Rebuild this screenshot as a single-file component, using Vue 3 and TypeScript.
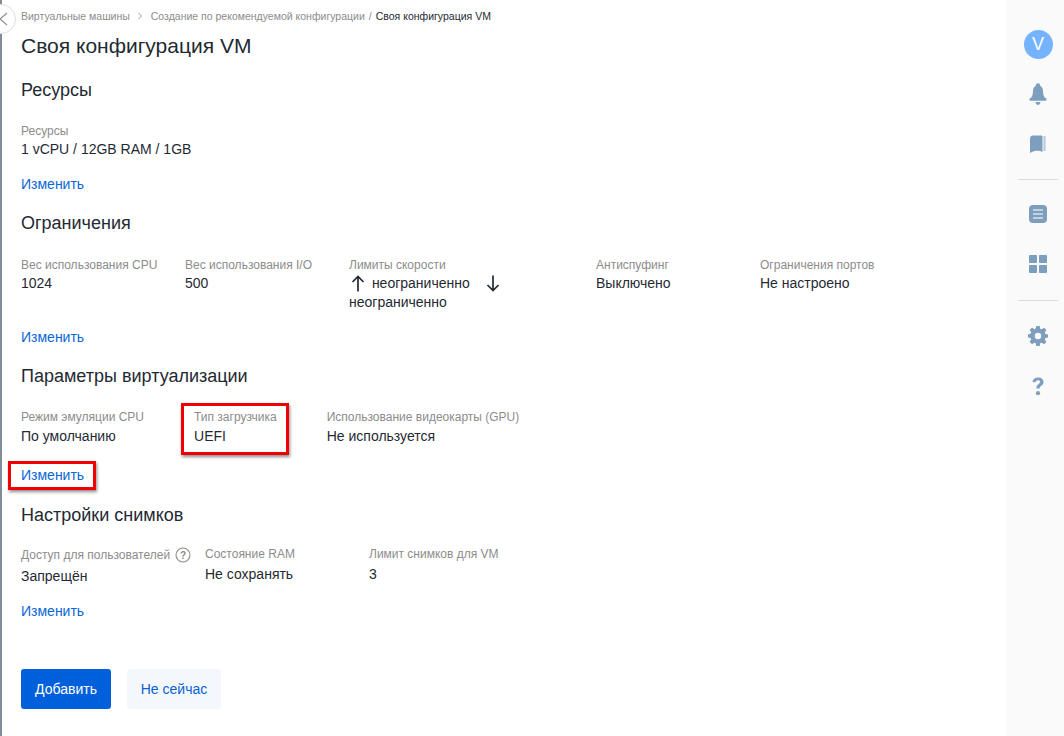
<script setup lang="ts">
interface Field {
  label: string
  value: string
  hint?: boolean
}

const limits: Field[] = [
  { label: 'Вес использования CPU', value: '1024' },
  { label: 'Вес использования I/O', value: '500' }
]
const limitsTail: Field[] = [
  { label: 'Антиспуфинг', value: 'Выключено' },
  { label: 'Ограничения портов', value: 'Не настроено' }
]
const snapshots: Field[] = [
  { label: 'Доступ для пользователей', value: 'Запрещён', hint: true },
  { label: 'Состояние RAM', value: 'Не сохранять' },
  { label: 'Лимит снимков для VM', value: '3' }
]
</script>

<template>
  <div class="page">
    <main class="content">
      <button class="back" aria-label="Назад">
        <svg width="9" height="14" viewBox="0 0 9 14"><path d="M8 1 1 7l7 6" fill="none" stroke="#8a8f94" stroke-width="1.100" /></svg>
      </button>

      <nav class="crumbs">
        <span>Виртуальные машины</span>
        <svg class="chev" width="6" height="8" viewBox="0 0 6 8"><path d="M1.500 1 4.500 4l-3 3" fill="none" stroke="#9a9a9a" /></svg>
        <span>Создание по рекомендуемой конфигурации</span>
        <span class="slash">/</span>
        <span class="current">Своя конфигурация VM</span>
      </nav>

      <h1>Своя конфигурация VM</h1>

      <section class="res">
        <h2>Ресурсы</h2>
        <div class="fields">
          <div class="field auto">
            <div class="label">Ресурсы</div>
            <div class="value">1 vCPU / 12GB RAM / 1GB</div>
          </div>
        </div>
        <a class="link">Изменить</a>
      </section>

      <section class="lim">
        <h2>Ограничения</h2>
        <div class="fields">
          <div v-for="f in limits" :key="f.label" class="field">
            <div class="label">{{ f.label }}</div>
            <div class="value">{{ f.value }}</div>
          </div>
          <div class="field speed">
            <div class="label">Лимиты скорости</div>
            <div class="value speed-value">
              <svg class="arrow up" width="14" height="17" viewBox="0 0 14 17"><path d="M7 16.500V1.500M1.500 7 7 1.500 12.500 7" fill="none" stroke="#1f2a33" stroke-width="1.700" /></svg>
              неограниченно
              <svg class="arrow down" width="14" height="17" viewBox="0 0 14 17"><path d="M7 .5v15M1.500 10 7 15.500 12.500 10" fill="none" stroke="#1f2a33" stroke-width="1.700" /></svg>
              неограниченно
            </div>
          </div>
          <div v-for="f in limitsTail" :key="f.label" class="field">
            <div class="label">{{ f.label }}</div>
            <div class="value">{{ f.value }}</div>
          </div>
        </div>
        <a class="link">Изменить</a>
      </section>

      <section class="virt">
        <h2>Параметры виртуализации</h2>
        <div class="fields wide-gap">
          <div class="field">
            <div class="label">Режим эмуляции CPU</div>
            <div class="value">По умолчанию</div>
          </div>
          <div class="field marked">
            <div class="label">Тип загрузчика</div>
            <div class="value">UEFI</div>
          </div>
          <div class="field">
            <div class="label">Использование видеокарты (GPU)</div>
            <div class="value">Не используется</div>
          </div>
        </div>
        <a class="link marked marked-link">Изменить</a>
      </section>

      <section class="snap">
        <h2>Настройки снимков</h2>
        <div class="fields">
          <div v-for="f in snapshots" :key="f.label" class="field" :class="{ hinted: f.hint }">
            <div class="label">
              {{ f.label }}
              <svg v-if="f.hint" class="hint" width="16" height="16" viewBox="0 0 16 16">
                <circle cx="8" cy="8" r="7" fill="none" stroke="#8c8c8c" stroke-width="1.100" />
                <text x="8" y="11.500" text-anchor="middle" font-size="10" font-weight="700" fill="#8c8c8c" font-family="Liberation Sans">?</text>
              </svg>
            </div>
            <div class="value">{{ f.value }}</div>
          </div>
        </div>
        <a class="link">Изменить</a>
      </section>

      <div class="actions">
        <button class="btn primary">Добавить</button>
        <button class="btn ghost">Не сейчас</button>
      </div>
    </main>

    <aside class="rail">
      <div class="avatar">V</div>
      <svg class="ico bell" width="18" height="22" viewBox="0 0 18 22">
        <circle cx="9" cy="2.500" r="2.200" />
        <path d="M9 2.500c-3.500 0-5 2.500-5 5.500 0 3.500-.8 5.500-2.500 7.500h15C14.800 13.500 14 11.500 14 8c0-3-1.500-5.500-5-5.500Z" />
        <rect x=".5" y="15" width="17" height="2.800" rx="1" />
        <path d="M6.500 19h5c-.3 1.800-1.300 3-2.500 3s-2.200-1.200-2.500-3Z" />
      </svg>
      <svg class="ico book" width="16" height="18" viewBox="0 0 16 18">
        <path d="M0 4C0 1.500 1.200.5 3 .5h8c1 0 1.500.6 1.500 1.500v15c-2-1.300-4-1.600-6.200-1.200C4 16.200 2 16.800 0 18Z" />
        <path d="M13.500 1H15.500v15h-2Z" opacity=".55" />
      </svg>
      <div class="rule"></div>
      <svg class="ico list" width="18" height="18" viewBox="0 0 18 18">
        <rect width="18" height="18" rx="4" />
        <path d="M4 5h10M4 9h10M4 13h10" stroke="#fafafa" stroke-width="1.600" opacity=".75" />
      </svg>
      <svg class="ico tiles" width="18" height="18" viewBox="0 0 18 18">
        <rect width="8" height="8" rx=".8" />
        <rect x="10" width="8" height="8" rx=".8" />
        <rect y="10" width="8" height="8" rx=".8" />
        <rect x="10" y="10" width="8" height="8" rx=".8" />
      </svg>
      <div class="rule second"></div>
      <svg class="ico gear" width="20" height="20" viewBox="0 0 20 20">
        <path fill-rule="evenodd" d="M8.300 0h3.400l.5 2.700 1.500.6 2.300-1.600 2.400 2.400-1.600 2.300.6 1.500 2.700.5v3.200l-2.700.5-.6 1.500 1.600 2.300-2.400 2.400-2.300-1.600-1.500.6-.5 2.700H8.300l-.5-2.700-1.500-.6L4 18.200l-2.400-2.400 1.600-2.300-.6-1.500-2.700-.5V8.300l2.700-.5.6-1.500L1.600 4 4 1.600l2.300 1.600 1.500-.6ZM10 6.800a3.200 3.200 0 1 0 0 6.400 3.200 3.200 0 0 0 0-6.400Z" />
      </svg>
      <svg class="ico quest" width="12" height="19" viewBox="0 0 12 19">
        <path d="M.5 5C.8 2 3 .5 6 .5c3.300 0 5.500 1.800 5.500 4.500 0 2-1 3-2.500 4-1 .7-1.400 1.200-1.400 2.500H4.400c0-2.300.7-3.300 2-4.200C7.500 6 8.100 5.500 8.100 4.800 8.100 3.800 7.300 3.300 6 3.300c-1.400 0-2.200.7-2.400 2Z" />
        <circle cx="6" cy="16.200" r="2.100" />
      </svg>
    </aside>
  </div>
</template>

<style scoped>
.page {
  display: flex;
  height: 736px;
  overflow: hidden;
  background: #fff;
  color: #1f2a33;
  font-family: "Liberation Sans", Arial, sans-serif;
}

.content {
  position: relative;
  flex: 1;
  padding: 9px 0 0 21px;
  box-shadow: inset 2px 0 0 #7e8c9c;
}

.back {
  position: absolute;
  left: -14px;
  top: 4px;
  width: 30px;
  height: 30px;
  display: flex;
  align-items: center;
  justify-content: flex-end;
  padding: 0 7px 0 0;
  border: 1px solid #ddd;
  border-radius: 50%;
  background: #fff;
  box-sizing: border-box;
}

.crumbs {
  display: flex;
  align-items: center;
  height: 14px;
  font-size: 10.500px;
  color: #8c8c8c;
}

.chev {
  margin: 0 8px 0 7px;
}

.slash {
  margin: 0 4px;
}

.current {
  color: #1f2a33;
}

h1 {
  margin: 8px 0 0;
  font-size: 21px;
  font-weight: 400;
  line-height: 30px;
}

h2 {
  margin: 0;
  font-size: 18px;
  font-weight: 400;
  line-height: 24px;
}

section {
  display: flex;
  flex-direction: column;
  align-items: flex-start;
}

.res,
.lim,
.virt {
  margin-top: 17px;
}

.snap {
  margin-top: 18px;
}

.fields {
  display: flex;
  margin-top: 21px;
}

.lim .fields {
  margin-top: 22px;
}

.snap .fields {
  margin-top: 19px;
}

.field {
  position: relative;
  width: 164px;
  padding-right: 14px;
  box-sizing: border-box;
}

.field.auto {
  width: auto;
  padding-right: 0;
}

.speed {
  width: 247px;
  padding-right: 90px;
}

.hinted {
  width: 184px;
}

.hinted .label {
  height: 18px;
}

.wide-gap {
  gap: 50px;
}

.wide-gap .field {
  width: auto;
  padding-right: 0;
}

.label {
  display: flex;
  align-items: center;
  gap: 5px;
  height: 16px;
  font-size: 12px;
  color: #8c8c8c;
  white-space: nowrap;
}

.value {
  margin-top: 1px;
  font-size: 14px;
  line-height: 19px;
}

.virt .value {
  margin-top: 2px;
}

.snap .value {
  margin-top: 3px;
}

.arrow {
  vertical-align: -4px;
}

.arrow.up {
  margin: 0 3px 0 2px;
}

.arrow.down {
  margin: 0 0 0 12px;
}

.hint {
  flex: none;
}

.link {
  position: relative;
  margin-top: 16px;
  font-size: 14px;
  line-height: 19px;
  color: #0a66d8;
  cursor: pointer;
}

.virt .link {
  margin-top: 20px;
}

.marked::after {
  content: "";
  position: absolute;
  top: -6px;
  left: -13px;
  right: -12px;
  bottom: -9px;
  border: 3px solid #f00000;
  box-shadow: 1px 2px 3px rgba(0, 0, 0, 0.45);
  pointer-events: none;
}

.marked-link::after {
  top: -5px;
  bottom: -5px;
  left: -13px;
  right: -12px;
}

.actions {
  display: flex;
  gap: 16px;
  margin-top: 48px;
}

.btn {
  height: 40px;
  padding: 0;
  border: 0;
  border-radius: 3px;
  font: 14px "Liberation Sans", Arial, sans-serif;
}

.primary {
  width: 90px;
  background: #0060dc;
  color: #fff;
}

.ghost {
  width: 94px;
  background: #f4f7fc;
  color: #0a5fd2;
}

.rail {
  display: flex;
  flex-direction: column;
  align-items: center;
  flex: none;
  width: 58px;
  padding-left: 6px;
  box-sizing: border-box;
  background: #fafafa;
}

.avatar {
  width: 29px;
  height: 29px;
  margin-top: 30px;
  border-radius: 50%;
  background: #75b3ff;
  color: #fff;
  font-size: 18px;
  line-height: 29px;
  text-align: center;
}

.ico {
  display: block;
  flex: none;
  fill: #7d9ebd;
}

.bell {
  margin-top: 24px;
}

.book {
  margin-top: 30px;
}

.rule {
  flex: none;
  width: 40px;
  height: 1px;
  margin-top: 26px;
  background: #dcdcdc;
}

.list {
  margin-top: 25px;
}

.tiles {
  margin-top: 32px;
}

.rule.second {
  margin-top: 27px;
}

.gear {
  margin-top: 25px;
}

.quest {
  margin-top: 31px;
}
</style>

<style>
html,
body {
  margin: 0;
  background: #fff;
}
</style>
